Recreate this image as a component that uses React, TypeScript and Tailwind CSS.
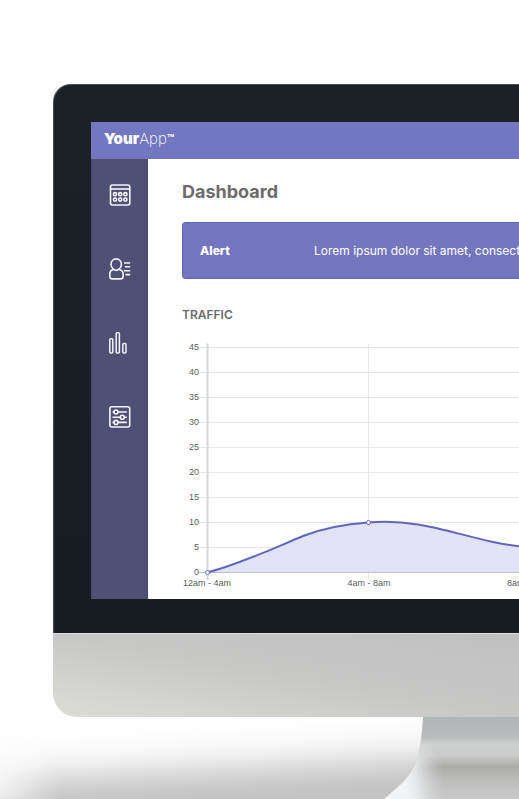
const ticks = [45, 40, 35, 30, 25, 20, 15, 10, 5, 0];

const iconClass = "block h-[22px] w-[22px] fill-none stroke-[#f5f4fc]";

function CalendarIcon() {
  return (
    <svg viewBox="0 0 22 22" className={iconClass} strokeWidth="1.6" aria-hidden="true">
      <rect x="1.5" y="1" width="19.3" height="20" rx="2" />
      <path d="M1.5 5H20.8" />
      {[6, 11.2, 16.4].map((x) => (
        <g key={x}>
          <circle cx={x} cy="10.2" r="1.6" />
          <circle cx={x} cy="15.6" r="1.6" />
        </g>
      ))}
    </svg>
  );
}

function UserListIcon() {
  return (
    <svg viewBox="0 0 22 22" className={iconClass} strokeWidth="1.6" aria-hidden="true">
      <path d="M4.4 11.2C2.9 10 2 8.3 2 6.4C2 3.2 4.2 .9 7.2 .9S12.4 3.2 12.4 6.4C12.4 8.3 11.5 10 10 11.2C8.4 12.6 6 12.6 4.4 11.2Z" />
      <path d="M4.2 11.6C1.8 12.3 .8 13.6 .8 15.800V18.2C.8 20 1.7 20.9 3.4 20.9H11.4C13.2 20.9 14.1 20 14.1 18.2V15.800C14.1 13.6 12.7 12.3 10.3 11.6" />
      <path d="M15 5H21.2M16 8.8H21.2M15 12.7H21.2M16.5 16.6H21.2" />
    </svg>
  );
}

function BarsIcon() {
  return (
    <svg viewBox="0 0 22 22" className={iconClass} strokeWidth="1.5" aria-hidden="true">
      <rect x=".8" y="6.7" width="3" height="14.3" rx="1" />
      <rect x="7.2" y=".8" width="3.2" height="20.2" rx="1" />
      <rect x="13.8" y="11.5" width="3.2" height="9.5" rx="1" />
    </svg>
  );
}

function SlidersIcon() {
  return (
    <svg viewBox="0 0 22 22" className={iconClass} strokeWidth="1.6" aria-hidden="true">
      <rect x=".9" y=".8" width="19.8" height="20.2" rx="2" />
      <path d="M3.5 6H5M9.2 6H17.8M3.5 11.2H11M15.500 11.2H17.8M3.5 16.4H5M9.2 16.4H17.8" />
      <circle cx="7" cy="6" r="2" />
      <circle cx="13.3" cy="11.2" r="2" />
      <circle cx="7" cy="16.4" r="2" />
    </svg>
  );
}

const navItems = [
  { label: "Calendar", Icon: CalendarIcon },
  { label: "Users", Icon: UserListIcon },
  { label: "Statistics", Icon: BarsIcon },
  { label: "Settings", Icon: SlidersIcon },
];

const trafficLine =
  "M25.5 232.5C58 224 90 209 121 196C143 187.500 164 184 186.5 182.500C250 177.500 284 202 348 207.500";

function TrafficChart() {
  return (
    <svg width="520" height="252" viewBox="0 0 520 252" className="block shrink-0" role="img" aria-label="Traffic">
      <path d="M186.5 3.5V240M348 3.5V240" stroke="#e9e9e9" />
      {ticks.map((t, i) => (
        <path key={t} d={`M17 ${7.5 + i * 25}H520`} stroke="#e6e6e6" />
      ))}
      <path d={`${trafficLine}V232.5Z`} fill="#e2e2f5" />
      <path d="M17 232.5H520" stroke="#c0c0c6" />
      <path d="M25.5 3.5V240" stroke="#d6d6d6" strokeWidth="2" />
      <path d={trafficLine} fill="none" stroke="#6265bb" strokeWidth="2" />
      <circle cx="25.5" cy="232.5" r="2" fill="#fff" stroke="#6265bb" />
      <circle cx="186.5" cy="182.5" r="2" fill="#fff" stroke="#6265bb" />
      <g className="fill-[#5c5c5c] font-['Liberation_Sans',Arial,sans-serif] text-[9px]">
        <g textAnchor="end">
          {ticks.map((t, i) => (
            <text key={t} x="17" y={10 + i * 25}>
              {t}
            </text>
          ))}
        </g>
        <g textAnchor="middle">
          <text x="25" y="246">12am - 4am</text>
          <text x="187" y="246">4am - 8am</text>
          <text x="349" y="246">8am - 12pm</text>
        </g>
      </g>
    </svg>
  );
}

function Stand() {
  return (
    <svg height="82" viewBox="0 0 519 82" preserveAspectRatio="none" className="block w-full" aria-hidden="true">
      <defs>
        <linearGradient id="desk" gradientUnits="userSpaceOnUse" x1="0" y1="20" x2="3.700" y2="94">
          <stop offset="0" stopColor="#fefefe" />
          <stop offset=".22" stopColor="#fafafa" />
          <stop offset=".42" stopColor="#efefef" />
          <stop offset=".6" stopColor="#dcdcdc" />
          <stop offset=".84" stopColor="#c8c8c8" />
          <stop offset="1" stopColor="#c3c3c3" />
        </linearGradient>
        <radialGradient id="corner" gradientUnits="userSpaceOnUse" cx="-10" cy="70" r="70">
          <stop offset="0" stopColor="#fff" stopOpacity=".8" />
          <stop offset="1" stopColor="#fff" stopOpacity="0" />
        </radialGradient>
        <linearGradient id="metal" x1="0" y1="0" x2="0" y2="1">
          <stop offset="0" stopColor="#b2b5b5" />
          <stop offset=".24" stopColor="#b8bbbb" />
          <stop offset=".34" stopColor="#cfd1d1" />
          <stop offset=".46" stopColor="#cbcccc" />
          <stop offset=".61" stopColor="#abaaa8" />
          <stop offset=".76" stopColor="#bcbcbb" />
          <stop offset="1" stopColor="#c9c9ca" />
        </linearGradient>
        <linearGradient id="edge" gradientUnits="userSpaceOnUse" x1="405" y1="66" x2="445" y2="62">
          <stop offset="0" stopColor="#f3f4f6" />
          <stop offset=".3" stopColor="#e8eaec" stopOpacity=".9" />
          <stop offset="1" stopColor="#d0d0d0" stopOpacity="0" />
        </linearGradient>
        <linearGradient id="fade" x1="0" y1="0" x2="0" y2="1">
          <stop offset=".25" stopColor="#000" />
          <stop offset=".5" stopColor="#fff" />
        </linearGradient>
        <mask id="lower">
          <rect width="519" height="82" fill="url(#fade)" />
        </mask>
      </defs>
      <rect width="519" height="82" fill="url(#desk)" />
      <rect width="519" height="82" fill="url(#corner)" />
      <path d="M423 0H519V82H384C398 70 409 62 415 47C420 35 422 18 423 0Z" fill="url(#metal)" />
      <path
        d="M423 0H519V82H384C398 70 409 62 415 47C420 35 422 18 423 0Z"
        fill="url(#edge)"
        mask="url(#lower)"
      />
    </svg>
  );
}

export default function App() {
  return (
    <div className="min-h-screen w-full overflow-hidden bg-[#fefefe] pt-[84px] font-[Inter,sans-serif]">
      <div className="pl-[53px]">
        <div className="rounded-tl-[18px] border-t border-l border-[#454a4d] bg-linear-to-b from-[#1b2125] to-[#171d21] pt-[37px] pb-[34px] pl-[37px]">
          <div className="flex h-[477px] flex-col overflow-hidden bg-white">
            <header className="flex h-[37px] shrink-0 items-center bg-[#7376c0] pl-[13px] text-white">
              <a href="#" className="flex pb-1 text-[15px] leading-5">
                <span className="font-black">Your</span>
                <span className="font-extralight">App</span>
                <span className="text-[12px] leading-5 font-bold">™</span>
              </a>
            </header>
            <div className="flex min-h-0 flex-1">
              <nav className="flex w-[57px] shrink-0 flex-col items-center gap-[52px] border-x border-[#454674] bg-[#504f75] pt-[25px]">
                {navItems.map(({ label, Icon }) => (
                  <a key={label} href="#" aria-label={label}>
                    <Icon />
                  </a>
                ))}
              </nav>
              <main className="min-w-0 flex-1 pl-[34px]">
                <h1 className="pt-[21px] text-[18px] leading-6 font-bold text-[#6b6b6b]">Dashboard</h1>
                <div
                  role="alert"
                  className="mt-[18px] flex h-[57px] items-center overflow-hidden rounded-l-[4px] border border-r-0 border-[#6063b4] bg-[#7376be] pl-[17px] text-[12px] whitespace-nowrap text-white"
                >
                  <strong className="w-[114px] shrink-0 font-extrabold">Alert</strong>
                  <span>Lorem ipsum dolor sit amet, consectetur</span>
                </div>
                <h2 className="mt-7 text-[12px] leading-4 font-semibold text-[#6b6b6b]">TRAFFIC</h2>
                <div className="mt-[17px] overflow-hidden">
                  <TrafficChart />
                </div>
              </main>
            </div>
          </div>
        </div>
        <div className="h-[84px] rounded-bl-[24px] border-t border-[#dedede] bg-linear-to-tr from-[#dcdcd7] via-[#c7c7c6] to-[#c0c0c1]" />
      </div>
      <Stand />
    </div>
  );
}
